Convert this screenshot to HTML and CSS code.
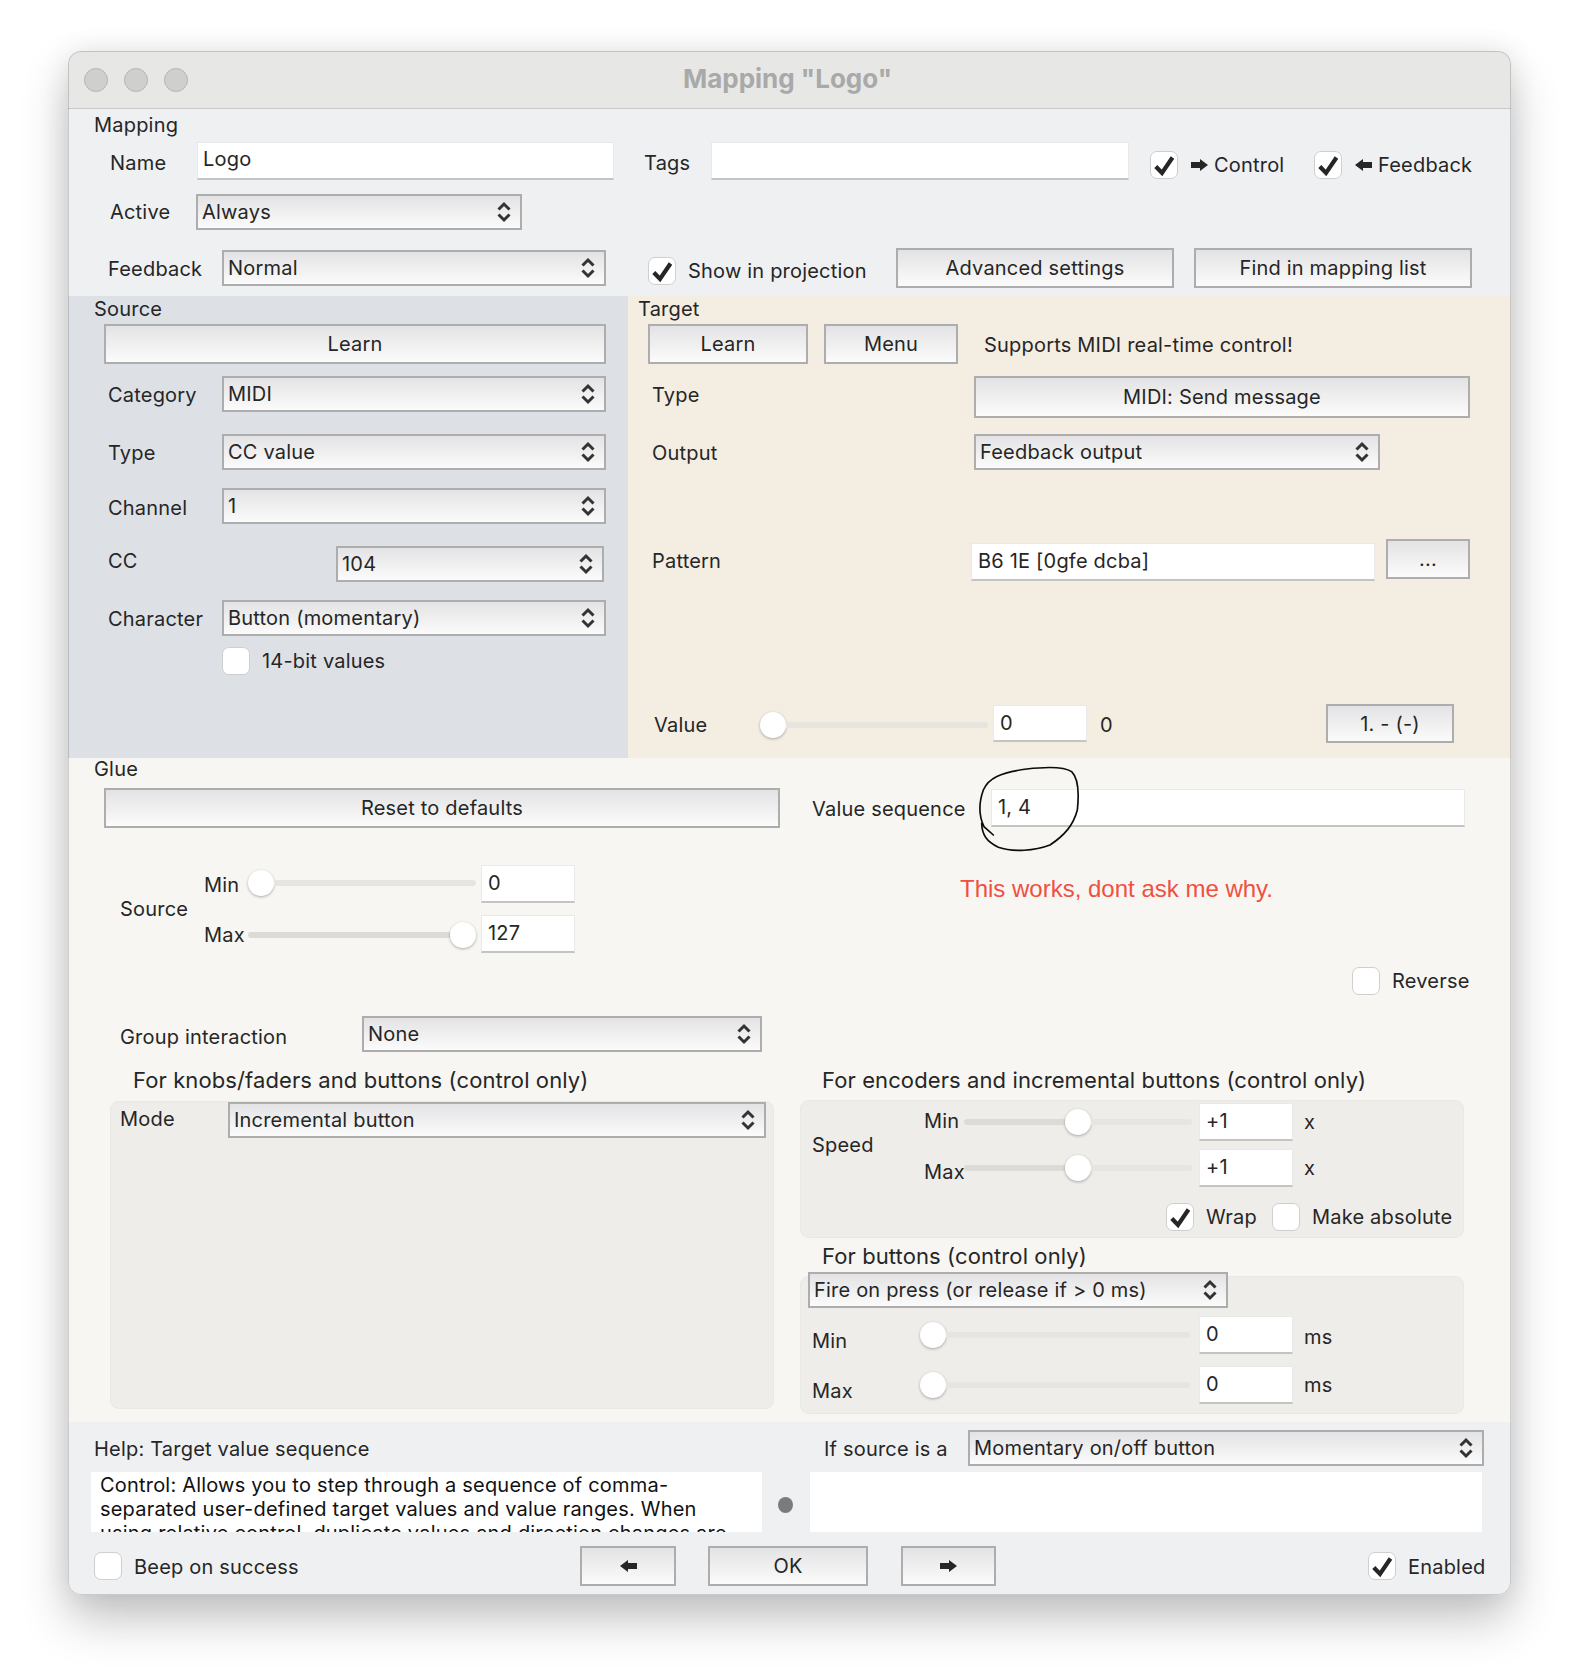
FILE: index.html
```html
<!DOCTYPE html>
<html lang="en">
<head>
  <meta charset="UTF-8">
  <title>Mapping "Logo"</title>
  <link rel="stylesheet" href="styles.css">
</head>
<body>

  <svg class="defs" width="0" height="0">
    <symbol id="tick" viewBox="0 0 26 26">
      <path d="M4.8 14.5 L11 21 L21.5 5.5" fill="none" stroke="#262626" stroke-width="4.2"/>
    </symbol>
    <symbol id="updown" viewBox="0 0 14 22">
      <path d="M1.5 8.5 L7 3 L12.5 8.5 M1.5 13.5 L7 19 L12.5 13.5" fill="none" stroke="#333" stroke-width="3"/>
    </symbol>
    <symbol id="arrowright" viewBox="0 0 17 12">
      <polygon points="0,3 9,3 9,0 17,6 9,12 9,9 0,9" fill="#262626"/>
    </symbol>
    <symbol id="arrowleft" viewBox="0 0 17 12">
      <polygon points="17,3 8,3 8,0 0,6 8,12 8,9 17,9" fill="#262626"/>
    </symbol>
  </svg>

  <div class="window">

    <div class="titlebar">
      <div class="lights">
        <span class="light"></span>
        <span class="light"></span>
        <span class="light"></span>
      </div>
      <div class="wintitle">Mapping "Logo"</div>
    </div>

    <!-- Mapping -->
    <section class="mapping">
      <div class="sec-title">Mapping</div>
      <div class="row r-name">
        <label class="lab lab-name lo">Name</label>
        <input class="input in-name" value="Logo">
        <label class="lab lab-tags lo">Tags</label>
        <input class="input in-tags" value="">
        <span class="check on ch-control"><svg><use href="#tick"/></svg></span>
        <svg class="arrow"><use href="#arrowright"/></svg>
        <span class="lab lab-control">Control</span>
        <span class="check on ch-low"><svg><use href="#tick"/></svg></span>
        <svg class="arrow"><use href="#arrowleft"/></svg>
        <span class="lab lab-fb">Feedback</span>
      </div>
      <div class="row r-active">
        <label class="lab lab-active">Active</label>
        <div class="select sel-active"><span>Always</span><svg class="updown"><use href="#updown"/></svg></div>
      </div>
      <div class="row r-feedback">
        <label class="lab lab-feedback">Feedback</label>
        <div class="select sel-wide"><span>Normal</span><svg class="updown"><use href="#updown"/></svg></div>
        <span class="check on ch-show"><svg><use href="#tick"/></svg></span>
        <span class="lab lab-show">Show in projection</span>
        <button class="btn btn-adv">Advanced settings</button>
        <button class="btn btn-find">Find in mapping list</button>
      </div>
    </section>

    <div class="panels">

      <!-- Source -->
      <section class="source">
        <div class="sec-title">Source</div>
        <button class="btn btn-learn">Learn</button>
        <div class="row r-cat">
          <label class="lab lab-src lab-lo1">Category</label>
          <div class="select sel-wide"><span>MIDI</span><svg class="updown"><use href="#updown"/></svg></div>
        </div>
        <div class="row r-type">
          <label class="lab lab-src lab-lo1">Type</label>
          <div class="select sel-wide"><span>CC value</span><svg class="updown"><use href="#updown"/></svg></div>
        </div>
        <div class="row r-chan">
          <label class="lab lab-src lo">Channel</label>
          <div class="select sel-wide"><span>1</span><svg class="updown"><use href="#updown"/></svg></div>
        </div>
        <div class="row r-cc">
          <label class="lab lab-cc">CC</label>
          <div class="select sel-cc"><span>104</span><svg class="updown"><use href="#updown"/></svg></div>
        </div>
        <div class="row r-char">
          <label class="lab lab-src lab-lo1">Character</label>
          <div class="select sel-wide"><span>Button (momentary)</span><svg class="updown"><use href="#updown"/></svg></div>
        </div>
        <div class="row r-14bit">
          <span class="check"></span>
          <span class="lab lab-after">14-bit values</span>
        </div>
      </section>

      <!-- Target -->
      <section class="target">
        <div class="sec-title">Target</div>
        <div class="row r-tlearn">
          <button class="btn btn-tlearn">Learn</button>
          <button class="btn btn-menu">Menu</button>
          <span class="lab lab-supports">Supports MIDI real-time control!</span>
        </div>
        <div class="row r-ttype">
          <label class="lab lab-ttype lab-hi">Type</label>
          <button class="btn btn-ttype">MIDI: Send message</button>
        </div>
        <div class="row r-output">
          <label class="lab lab-ttype lab-lo1">Output</label>
          <div class="select sel-output"><span>Feedback output</span><svg class="updown"><use href="#updown"/></svg></div>
        </div>
        <div class="row r-pattern">
          <label class="lab lab-pattern">Pattern</label>
          <input class="input in-pattern" value="B6 1E [0gfe dcba]">
          <button class="btn btn-dots">...</button>
        </div>
        <div class="row r-value">
          <label class="lab lab-value">Value</label>
          <div class="slider sl-228"><span class="thumb"></span><span class="rest"></span></div>
          <input class="input in-value" value="0">
          <span class="lab lab-zero">0</span>
          <button class="btn btn-seq">1. - (-)</button>
        </div>
      </section>
    </div>

    <!-- Glue -->
    <section class="glue">
      <svg class="scribble" viewBox="0 0 420 300">
        <path d="M100 225 L72 200 C60 175 54 135 70 90 C85 55 120 38 200 27 C260 20 310 18 335 35 C355 55 358 95 352 150 C340 195 315 225 270 255 C225 272 160 278 115 262 C80 245 66 225 65 190" fill="none" stroke="#0c0c0c" stroke-width="5" stroke-linecap="round"/>
      </svg>

      <div class="sec-title">Glue</div>
      <div class="row r-reset">
        <button class="btn btn-reset">Reset to defaults</button>
        <label class="lab lab-seq">Value sequence</label>
        <input class="input in-seq" value="1, 4">
      </div>
      <div class="row r-range">
        <label class="lab lab-range">Source</label>
        <div class="range-rows">
          <div class="row range-row">
            <label class="lab lab-minmax">Min</label>
            <div class="slider sl-228"><span class="thumb"></span><span class="rest"></span></div>
            <input class="input in-range" value="0">
          </div>
          <div class="row range-row">
            <label class="lab lab-minmax">Max</label>
            <div class="slider sl-228"><span class="fill" style="width:202px"></span><span class="thumb"></span></div>
            <input class="input in-range" value="127">
          </div>
        </div>
        <div class="note">This works, dont ask me why.</div>
      </div>
      <div class="row r-reverse">
        <span class="check"></span>
        <span class="lab lab-after">Reverse</span>
      </div>
      <div class="row r-group">
        <label class="lab lab-group">Group interaction</label>
        <div class="select sel-group"><span>None</span><svg class="updown"><use href="#updown"/></svg></div>
      </div>

      <div class="cols">
        <div class="col-left">
          <div class="heading">For knobs/faders and buttons (control only)</div>
          <div class="box box-mode">
            <div class="row">
              <label class="lab lab-mode">Mode</label>
              <div class="select sel-mode"><span>Incremental button</span><svg class="updown"><use href="#updown"/></svg></div>
            </div>
          </div>
        </div>

        <div class="col-right">
          <div class="heading">For encoders and incremental buttons (control only)</div>
          <div class="box box-speed">
            <div class="row">
              <label class="lab lab-speed">Speed</label>
              <div class="speed-rows">
                <div class="row speed-row">
                  <label class="lab lab-speedmm lab-up">Min</label>
                  <div class="slider sl-228"><span class="fill" style="width:101px"></span><span class="thumb"></span><span class="rest"></span></div>
                  <input class="input in-speed" value="+1">
                  <span class="lab lab-unit">x</span>
                </div>
                <div class="row speed-row">
                  <label class="lab lab-speedmm lab-down">Max</label>
                  <div class="slider sl-228"><span class="fill" style="width:101px"></span><span class="thumb"></span><span class="rest"></span></div>
                  <input class="input in-speed" value="+1">
                  <span class="lab lab-unit">x</span>
                </div>
              </div>
            </div>
            <div class="row r-wrap">
              <span class="check on"><svg><use href="#tick"/></svg></span>
              <span class="lab lab-wrap">Wrap</span>
              <span class="check"></span>
              <span class="lab lab-after">Make absolute</span>
            </div>
          </div>

          <div class="heading heading-btn">For buttons (control only)</div>
          <div class="box box-btns">
            <div class="select sel-fire"><span>Fire on press (or release if &gt; 0 ms)</span><svg class="updown"><use href="#updown"/></svg></div>
            <div class="row r-btnmin">
              <label class="lab lab-btnmm lo2">Min</label>
              <div class="slider sl-270"><span class="thumb"></span><span class="rest"></span></div>
              <input class="input in-btn" value="0">
              <span class="lab lab-unit lo">ms</span>
            </div>
            <div class="row r-btnmax">
              <label class="lab lab-btnmm lo2">Max</label>
              <div class="slider sl-270"><span class="thumb"></span><span class="rest"></span></div>
              <input class="input in-btn" value="0">
              <span class="lab lab-unit">ms</span>
            </div>
          </div>
        </div>
      </div>
    </section>

    <!-- Help and footer -->
    <section class="bottom">
      <div class="row r-help">
        <label class="lab lab-help lab-lo1">Help: Target value sequence</label>
        <label class="lab lab-ifsource lab-lo1">If source is a</label>
        <div class="select sel-ifsource"><span>Momentary on/off button</span><svg class="updown"><use href="#updown"/></svg></div>
      </div>
      <div class="row r-helptext">
        <div class="helpbox">Control: Allows you to step through a sequence of comma-<br>separated user-defined target values and value ranges. When<br>using relative control, duplicate values and direction changes are</div>
        <span class="dot"></span>
        <div class="helpbox2"></div>
      </div>
      <div class="row r-footer">
        <span class="check ch-beep"></span>
        <span class="lab lab-beep lab-lo1">Beep on success</span>
        <button class="btn btn-prev"><svg class="arrow"><use href="#arrowleft"/></svg></button>
        <button class="btn btn-ok">OK</button>
        <button class="btn btn-next"><svg class="arrow"><use href="#arrowright"/></svg></button>
        <span class="check on ch-enabled"><svg><use href="#tick"/></svg></span>
        <span class="lab lab-enabled lab-lo1">Enabled</span>
      </div>
    </section>
  </div>

</body>
</html>
```

FILE: styles.css
```css
html, body {
  background-color: #fff;
}

body {
  margin: 0;
  padding: 0;
  color: #262626;
  font-family: "Inter", "Liberation Sans", sans-serif;
  font-size: 20px;
  line-height: 24px;
  letter-spacing: 0.2px;
}

.defs {
  display: block;
  height: 0;
}

.window {
  position: relative;
  width: 1443px;
  height: 1544px;
  margin: 51px 0 83px 68px;
  border-radius: 13px;
  overflow: hidden;
  background-color: #eff0f2;
  box-shadow: 0 24px 48px rgba(0, 0, 0, 0.24), 0 0 28px rgba(0, 0, 0, 0.08);
}

.window::after {
  content: "";
  position: absolute;
  inset: 0;
  border-radius: 13px;
  box-shadow: inset 0 0 0 1px rgba(0, 0, 0, 0.16);
  pointer-events: none;
}

.titlebar {
  display: grid;
  grid-template-columns: 1fr auto 1fr;
  align-items: center;
  height: 58px;
  padding-right: 4px;
  box-sizing: border-box;
  background-color: #e7e7e5;
  border-bottom: 1px solid #c9c9c9;
}

.lights {
  display: flex;
  gap: 16px;
  padding-left: 16px;
}

.light {
  width: 24px;
  height: 24px;
  box-sizing: border-box;
  border-radius: 50%;
  background-color: #cfcfcd;
  border: 1px solid #b6b6b4;
}

.wintitle {
  padding-bottom: 2px;
  font-size: 26px;
  font-weight: 700;
  letter-spacing: 0;
  color: #a9a9a9;
}

/* common controls */
.row {
  display: flex;
  align-items: center;
}

.sec-title {
  height: 24px;
}

.lab {
  display: block;
  flex: none;
  box-sizing: border-box;
}

.lo { padding-top: 4px; }
.lo2 { padding-top: 12px; }
.lab-lo1 { padding-top: 2px; }
.lab-hi { padding-bottom: 5px; }
.lab-up { padding-bottom: 2px; }
.lab-down { padding-top: 8px; }

.input {
  display: block;
  flex: none;
  height: 38px;
  box-sizing: border-box;
  margin: 0;
  padding: 0 6px 1px;
  background-color: #fff;
  border: 1px solid #e9e9e7;
  border-bottom: 2px solid #c4c4c2;
  border-radius: 0;
  outline: none;
  color: #262626;
  font: inherit;
  letter-spacing: inherit;
}

.select {
  display: flex;
  flex: none;
  align-items: center;
  justify-content: space-between;
  height: 36px;
  box-sizing: border-box;
  padding: 0 9px 0 4px;
  background: linear-gradient(#e3e3e5, #fbfbfb);
  border: 2px solid #adadad;
}

.updown {
  width: 14px;
  height: 22px;
  flex: none;
}

.btn {
  display: block;
  flex: none;
  height: 40px;
  box-sizing: border-box;
  margin: 0;
  padding: 0;
  background: linear-gradient(#e3e3e5, #fbfbfb);
  border: 2px solid #adadad;
  border-radius: 0;
  color: #262626;
  font: inherit;
  letter-spacing: inherit;
  text-align: center;
}

.check {
  display: block;
  flex: none;
  width: 28px;
  height: 28px;
  box-sizing: border-box;
  background-color: #fff;
  border: 1px solid #cfcfcf;
  border-radius: 7px;
}

.check svg {
  display: block;
  width: 26px;
  height: 26px;
}

.arrow {
  display: block;
  flex: none;
  width: 17px;
  height: 12px;
}

.slider {
  display: flex;
  flex: none;
  align-items: center;
  height: 26px;
}

.sl-228 { width: 228px; }
.sl-270 { width: 270px; }

.thumb {
  flex: none;
  width: 26px;
  height: 26px;
  border-radius: 50%;
  background-color: #fff;
  box-shadow: 0 1px 3px rgba(0, 0, 0, 0.3);
}

.fill {
  flex: none;
  height: 6px;
  border-radius: 3px 0 0 3px;
  background-color: #dcdbd5;
}

.rest {
  flex: 1;
  height: 6px;
  border-radius: 0 3px 3px 0;
  background-color: #e7e5df;
}

/* mapping */
.mapping {
  height: 187px;
  box-sizing: border-box;
  padding-top: 4px;
  background-color: #eff0f2;
}

.mapping .sec-title { margin-left: 26px; }

.r-name { height: 38px; margin-top: 5px; }
.lab-name { margin-left: 42px; width: 87px; }
.in-name { width: 417px; padding: 0 5px 3px; }
.lab-tags { margin-left: 30px; width: 67px; }
.in-tags { width: 418px; }
.ch-control { margin: 8px 0 0 21px; }
.r-name .arrow { margin: 8px 0 0 13px; }
.lab-control { margin: 8px 0 0 6px; width: 100px; }
.ch-low { margin-top: 8px; }
.lab-fb { margin: 8px 0 0 6px; }

.r-active { height: 36px; margin-top: 14px; }
.lab-active { margin-left: 42px; width: 86px; }
.sel-active { width: 326px; }

.r-feedback { height: 40px; margin-top: 18px; }
.lab-feedback { margin-left: 40px; width: 114px; padding-top: 2px; }
.sel-wide { width: 384px; }
.ch-show { margin: 6px 0 0 42px; }
.lab-show { margin-left: 12px; width: 208px; padding-top: 6px; }
.btn-adv { width: 278px; }
.btn-find { width: 278px; margin-left: 20px; }

/* source and target */
.panels {
  display: flex;
  height: 462px;
}

.source {
  width: 560px;
  box-sizing: border-box;
  padding-top: 1px;
  background-color: #dde1e6;
}

.source .sec-title { margin-left: 26px; }

.btn-learn { width: 502px; height: 40px; margin: 3px 0 0 36px; }

.lab-src { margin-left: 40px; width: 114px; }
.r-cat { margin-top: 12px; }
.r-type { margin-top: 22px; }
.r-chan { margin-top: 18px; }
.r-cc { margin-top: 22px; }
.lab-cc { margin-left: 40px; width: 228px; padding-bottom: 6px; }
.sel-cc { width: 268px; }
.r-char { margin-top: 18px; }
.r-14bit { margin: 11px 0 0 154px; }
.lab-after { margin-left: 12px; }

.target {
  width: 883px;
  box-sizing: border-box;
  padding-top: 1px;
  background-color: #f4ede2;
}

.target .sec-title { margin-left: 10px; }

.r-tlearn { margin-top: 3px; height: 40px; }
.btn-tlearn { width: 160px; height: 40px; margin-left: 20px; }
.btn-menu { width: 134px; height: 40px; margin-left: 16px; }
.lab-supports { margin-left: 26px; padding-top: 1px; }

.r-ttype { height: 42px; margin-top: 12px; }
.lab-ttype { margin-left: 24px; width: 322px; }
.btn-ttype { width: 496px; height: 42px; }
.r-output { height: 36px; margin-top: 16px; }
.sel-output { width: 406px; }

.r-pattern { height: 42px; margin-top: 69px; align-items: flex-start; }
.lab-pattern { margin: 10px 0 0 24px; width: 319px; }
.in-pattern { width: 404px; margin-top: 4px; }
.btn-dots { width: 84px; margin-left: 11px; }

.r-value { height: 39px; margin-top: 123px; }
.lab-value { margin-left: 26px; width: 106px; padding-top: 2px; }
.r-value .slider { margin-top: 3px; }
.in-value { width: 94px; height: 37px; margin-left: 5px; }
.lab-zero { margin-left: 13px; width: 226px; padding-top: 3px; }
.btn-seq { width: 128px; height: 39px; }

/* glue */
.glue {
  position: relative;
  height: 664px;
  background-color: #f7f6f2;
}

.glue .sec-title { height: 22px; line-height: 22px; margin-left: 26px; }

.scribble {
  position: absolute;
  left: 892px;
  top: 2px;
  width: 140px;
  height: 100px;
  z-index: 2;
}

.r-reset { height: 40px; margin-top: 8px; }
.btn-reset { width: 676px; margin-left: 36px; }
.lab-seq { margin-left: 32px; width: 179px; padding-top: 2px; }
.in-seq { width: 474px; }

.r-range { height: 88px; margin-top: 37px; align-items: center; }
.lab-range { margin-left: 52px; width: 84px; }
.range-rows { display: flex; flex-direction: column; gap: 12px; }
.range-row { height: 38px; }
.range-row:first-child .slider { margin-bottom: 2px; }
.range-row:last-child .slider { margin-top: 2px; }
.lab-minmax { width: 44px; padding-top: 2px; }
.in-range { width: 94px; margin-left: 5px; }
.note {
  align-self: flex-start;
  margin: 10px 0 0 385px;
  color: #f0503f;
  font-family: "Liberation Sans", Arial, sans-serif;
  font-size: 24px;
  letter-spacing: 0;
  line-height: 28px;
  white-space: nowrap;
}

.r-reverse { height: 28px; margin: 14px 0 0 1284px; }

.r-group { height: 36px; margin-top: 21px; }
.lab-group { margin-left: 52px; width: 242px; padding-top: 5px; }
.sel-group { width: 400px; }

.cols {
  display: flex;
  margin-top: 16px;
}

.col-left { width: 664px; margin-left: 42px; }
.col-right { width: 664px; margin-left: 26px; }

.heading {
  height: 24px;
  margin-left: 23px;
  font-size: 22px;
  letter-spacing: 0.1px;
  white-space: nowrap;
}

.col-right .heading { margin-left: 22px; }
.col-right .heading-btn { margin-top: 6px; }

.box {
  display: flow-root;
  box-sizing: border-box;
  background-color: #eeedea;
  border-radius: 9px;
  box-shadow: inset 0 0 0 1px #e9e8e4;
}

.box-mode { height: 308px; margin-top: 9px; padding-top: 1px; }
.lab-mode { margin-left: 10px; width: 108px; padding-bottom: 2px; }
.sel-mode { width: 538px; }

.box-speed { height: 138px; margin-top: 8px; padding-top: 3px; }
.lab-speed { margin-left: 12px; width: 112px; }
.speed-rows { display: flex; flex-direction: column; gap: 8px; }
.speed-row { height: 38px; }
.lab-speedmm { width: 40px; }
.in-speed { width: 94px; margin-left: 7px; }
.lab-unit { margin-left: 11px; }
.r-wrap { height: 28px; margin: 16px 0 0 366px; }
.lab-wrap { margin-left: 12px; width: 66px; }

.box-btns { height: 138px; margin-top: 8px; }
.sel-fire { width: 420px; margin: -4px 0 0 8px; }
.r-btnmin { height: 38px; margin-top: 8px; }
.r-btnmax { height: 38px; margin-top: 12px; }
.lab-btnmm { margin-left: 12px; width: 108px; }
.in-btn { width: 94px; margin-left: 9px; }

/* help and footer */
.bottom {
  height: 173px;
  box-sizing: border-box;
  padding-top: 8px;
  background-color: #eff0f2;
}

.r-help { height: 36px; }
.lab-help { margin-left: 26px; width: 730px; }
.lab-ifsource { width: 144px; }
.sel-ifsource { width: 516px; }

.r-helptext { height: 60px; margin-top: 6px; }
.helpbox {
  flex: none;
  width: 671px;
  height: 60px;
  box-sizing: border-box;
  margin-left: 23px;
  padding: 1px 9px 0;
  overflow: hidden;
  background-color: #fff;
  color: #111;
  line-height: 24px;
  white-space: nowrap;
}

.dot {
  flex: none;
  width: 15px;
  height: 16px;
  margin: 6px 0 0 16px;
  border-radius: 50%;
  background-color: #7b7b7d;
}

.helpbox2 {
  flex: none;
  width: 672px;
  height: 60px;
  margin-left: 17px;
  background-color: #fff;
}

.r-footer { height: 40px; margin-top: 14px; }
.ch-beep { margin-left: 26px; }
.lab-beep { margin-left: 12px; width: 446px; }
.btn-prev, .btn-next { display: flex; align-items: center; justify-content: center; }
.btn-prev { width: 96px; }
.btn-ok { width: 160px; margin-left: 32px; }
.btn-next { width: 95px; margin-left: 33px; }
.ch-enabled { margin-left: 372px; }
.lab-enabled { margin-left: 12px; }
```
